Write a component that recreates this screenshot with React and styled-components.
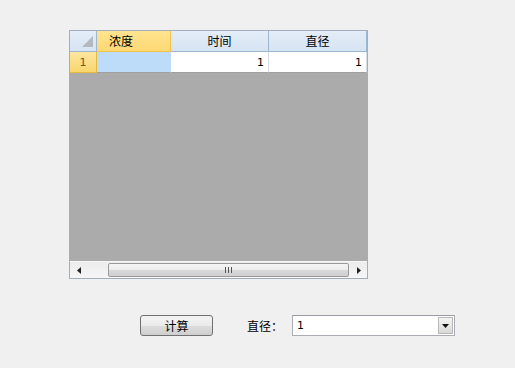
import styled, { createGlobalStyle } from 'styled-components'

const Global = createGlobalStyle`
  body {
    margin: 0;
    background: #f0f0f0;
    font-family: "Noto Sans CJK SC", "DejaVu Sans", sans-serif;
    font-size: 12px;
    color: #000;
  }
`

const Page = styled.div`
  width: 515px;
  height: 368px;
  display: flex;
  flex-direction: column;
  padding: 30px 0 0 69px;
  box-sizing: border-box;
`

const Grid = styled.div`
  width: 299px;
  height: 249px;
  border: 1px solid #a3aebd;
  box-sizing: border-box;
  display: flex;
  flex-direction: column;
  background: #ababab;
`

const Row = styled.div`
  display: flex;
  height: ${p => p.h}px;
  flex-shrink: 0;
`

const HeadCell = styled.div`
  width: ${p => p.w}px;
  box-sizing: border-box;
  border-right: 1px solid ${p => (p.sel ? '#f2c24d' : '#9eb6ce')};
  border-bottom: 1px solid ${p => (p.sel ? '#f2c24d' : '#9eb6ce')};
  background: ${p =>
    p.sel
      ? 'linear-gradient(#ffe48f, #fdd874)'
      : 'linear-gradient(#e4edf8, #d6e3f3)'};
  display: flex;
  align-items: center;
  justify-content: ${p => (p.left ? 'flex-start' : 'center')};
  padding-left: ${p => (p.left ? 12 : 0)}px;
  line-height: 1;
  position: relative;
`

const Corner = styled.svg`
  position: absolute;
  right: 3px;
  bottom: 4px;
`

const RowHead = styled.div`
  width: 27px;
  box-sizing: border-box;
  background: linear-gradient(#fde6a0, #f9d56f);
  border-right: 1px solid #e6b93f;
  border-bottom: 1px solid #e6b93f;
  display: flex;
  align-items: center;
  justify-content: center;
  font-family: "DejaVu Sans", sans-serif;
  font-size: 11px;
  color: #6b5a2a;
`

const Cell = styled.div`
  width: ${p => p.w}px;
  box-sizing: border-box;
  background: ${p => (p.sel ? '#bcdcfa' : '#fff')};
  border-right: 1px solid ${p => (p.sel ? '#bcdcfa' : '#d5dde7')};
  border-bottom: 1px solid #a0a0a0;
  display: flex;
  align-items: center;
  justify-content: flex-end;
  padding-right: 4px;
  font-family: "DejaVu Sans", sans-serif;
  font-size: 11px;
`

const Empty = styled.div`
  flex: 1;
  background: #ababab;
`

const HScroll = styled.div`
  height: 16px;
  flex-shrink: 0;
  background: linear-gradient(#ececec, #f6f6f6);
  display: flex;
  align-items: center;
  border-top: 1px solid #f7f7f7;
`

const Arrow = styled.div`
  width: 17px;
  height: 16px;
  display: flex;
  align-items: center;
  justify-content: center;
`

const Track = styled.div`
  flex: 1;
  height: 16px;
  display: flex;
  align-items: center;
  padding-left: 21px;
  box-sizing: border-box;
`

const Thumb = styled.div`
  width: 241px;
  height: 14px;
  box-sizing: border-box;
  border: 1px solid #9a9a9a;
  border-radius: 2px;
  background: linear-gradient(#f4f4f4 0%, #ececec 50%, #d9d9d9 51%, #cfcfcf 100%);
  display: flex;
  align-items: center;
  justify-content: center;
  gap: 2px;
`

const Grip = styled.span`
  width: 1px;
  height: 6px;
  background: #555;
`

const Controls = styled.div`
  display: flex;
  align-items: center;
  margin-top: 36px;
  margin-left: 71px;
`

const Button = styled.button`
  width: 73px;
  height: 21px;
  border: 1px solid #707070;
  border-radius: 3px;
  background: linear-gradient(#f3f3f3 0%, #ebebeb 50%, #dddddd 51%, #cfcfcf 100%);
  font-family: "Noto Sans CJK SC", sans-serif;
  font-size: 12px;
  padding: 0;
  line-height: 1;
  color: #000;
`

const Label = styled.span`
  margin-left: 34px;
  width: 45px;
  font-size: 12px;
  line-height: 1;
`

const Combo = styled.div`
  width: 163px;
  height: 21px;
  box-sizing: border-box;
  border: 1px solid #abadb3;
  border-top-color: #9a9ca3;
  background: #fff;
  display: flex;
  align-items: center;
`

const ComboText = styled.span`
  flex: 1;
  padding-left: 4px;
  font-family: "DejaVu Sans", sans-serif;
  font-size: 11px;
`

const DropBtn = styled.div`
  width: 15px;
  height: 17px;
  margin-right: 1px;
  box-sizing: border-box;
  border: 1px solid #b8b8b8;
  background: linear-gradient(#f4f4f4, #d8d8d8);
  display: flex;
  align-items: center;
  justify-content: center;
`

export default function App() {
  return (
    <Page>
      <Global />
      <Grid>
        <Row h={21}>
          <HeadCell w={27}>
            <Corner width="11" height="11" viewBox="0 0 11 11">
              <polygon points="11,0 11,11 0,11" fill="#b4b9c0" />
            </Corner>
          </HeadCell>
          <HeadCell w={74} sel left>浓度</HeadCell>
          <HeadCell w={98}>时间</HeadCell>
          <HeadCell w={98}>直径</HeadCell>
        </Row>
        <Row h={21}>
          <RowHead>1</RowHead>
          <Cell w={74} sel></Cell>
          <Cell w={98}>1</Cell>
          <Cell w={98}>1</Cell>
        </Row>
        <Empty />
        <HScroll>
          <Arrow>
            <svg width="4" height="7" viewBox="0 0 4 7">
              <polygon points="4,0 4,7 0,3.5" fill="#222" />
            </svg>
          </Arrow>
          <Track>
            <Thumb>
              <Grip />
              <Grip />
              <Grip />
            </Thumb>
          </Track>
          <Arrow>
            <svg width="4" height="7" viewBox="0 0 4 7">
              <polygon points="0,0 4,3.5 0,7" fill="#222" />
            </svg>
          </Arrow>
        </HScroll>
      </Grid>
      <Controls>
        <Button>计算</Button>
        <Label>直径：</Label>
        <Combo>
          <ComboText>1</ComboText>
          <DropBtn>
            <svg width="7" height="4" viewBox="0 0 7 4">
              <polygon points="0,0 7,0 3.5,4" fill="#111" />
            </svg>
          </DropBtn>
        </Combo>
      </Controls>
    </Page>
  )
}
